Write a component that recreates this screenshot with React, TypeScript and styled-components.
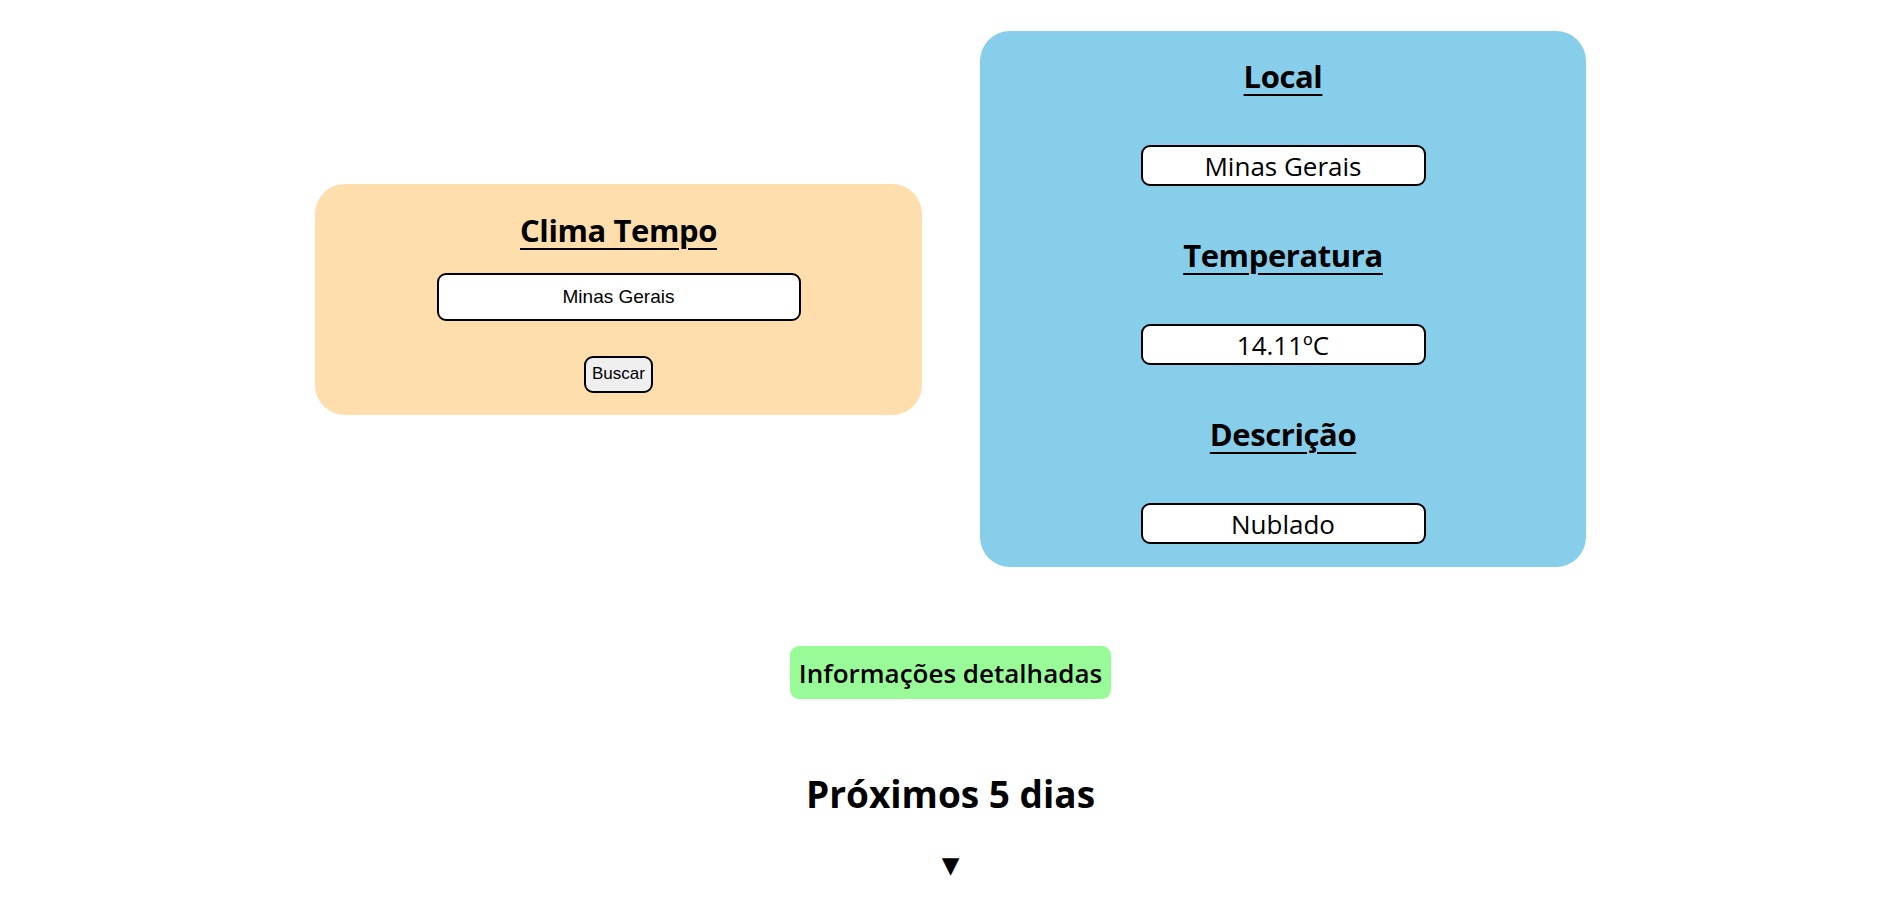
import React from "react";
import styled, { createGlobalStyle } from "styled-components";

const GlobalStyle = createGlobalStyle`
    body {
        margin: 0;
        background: #fff;
        font-family: 'Open Sans', 'Noto Sans', sans-serif;
        color: #000;
    }
`;

const Page = styled.div`
    display: flex;
    flex-direction: column;
    align-items: center;
    padding: 31px 0 0 7px;
`;

const CardsRow = styled.div`
    display: flex;
    align-items: center;
    gap: 58px;
`;

const Card = styled.div<{ $bg: string; $width: number }>`
    display: flex;
    flex-direction: column;
    align-items: center;
    width: ${(p) => p.$width}px;
    box-sizing: border-box;
    background: ${(p) => p.$bg};
    border-radius: 30px;
`;

const SearchCard = styled(Card)`
    padding: 24px 0 22px;
`;

const InfoCard = styled(Card)`
    padding: 23px 0 23px;
`;

const Title = styled.h2`
    margin: 0;
    height: 44px;
    line-height: 44px;
    font-size: 31px;
    font-weight: 700;
    text-decoration: underline;
    text-decoration-thickness: 2px;
    text-underline-offset: 6px;
    letter-spacing: -0.4px;
`;

const SearchInput = styled.input`
    margin-top: 21px;
    width: 364px;
    height: 48px;
    box-sizing: border-box;
    border: 2px solid #000;
    border-radius: 9px;
    background: #fff;
    text-align: center;
    font-family: 'Liberation Sans', Arial, sans-serif;
    font-size: 19px;
    color: #000;
    outline: none;
`;

const SearchButton = styled.button`
    margin-top: 35px;
    height: 37px;
    padding: 0 6px;
    box-sizing: border-box;
    border: 2px solid #000;
    border-radius: 9px;
    background: #efefef;
    font-family: 'Liberation Sans', Arial, sans-serif;
    font-size: 17px;
    color: #000;
    cursor: pointer;
`;

const ValueBox = styled.div<{ $last?: boolean }>`
    margin: 47px 0 ${(p) => (p.$last ? 0 : 47)}px;
    width: 285px;
    height: 41px;
    box-sizing: border-box;
    border: 2px solid #000;
    border-radius: 9px;
    background: #fff;
    display: flex;
    align-items: center;
    justify-content: center;
    font-size: 26px;
    font-weight: 400;
`;

const DetailsButton = styled.button`
    margin-top: 79px;
    width: 321px;
    height: 53px;
    border: none;
    border-radius: 9px;
    background: #98fb98;
    font-family: 'Open Sans', 'Noto Sans', sans-serif;
    font-size: 26px;
    font-weight: 600;
    color: #000;
    padding: 0;
    cursor: pointer;
`;

const ForecastTitle = styled.h1`
    margin: 69px 0 0;
    height: 52px;
    line-height: 52px;
    font-size: 37px;
    font-weight: 700;
`;

const Arrow = styled.div`
    margin-top: 33px;
    font-family: 'DejaVu Sans', sans-serif;
    font-size: 23px;
    line-height: 24px;
    cursor: pointer;
`;

const App = () => {
    return (
        <>
            <GlobalStyle />
            <Page>
                <CardsRow>
                    <SearchCard $bg="#ffdead" $width={607}>
                        <Title>Clima Tempo</Title>
                        <SearchInput readOnly defaultValue="Minas Gerais" />
                        <SearchButton>Buscar</SearchButton>
                    </SearchCard>
                    <InfoCard $bg="#87ceeb" $width={606}>
                        <Title>Local</Title>
                        <ValueBox>Minas Gerais</ValueBox>
                        <Title>Temperatura</Title>
                        <ValueBox>14.11ºC</ValueBox>
                        <Title>Descrição</Title>
                        <ValueBox $last>Nublado</ValueBox>
                    </InfoCard>
                </CardsRow>
                <DetailsButton>Informações detalhadas</DetailsButton>
                <ForecastTitle>Próximos 5 dias</ForecastTitle>
                <Arrow>▼</Arrow>
            </Page>
        </>
    );
};

export default App;
